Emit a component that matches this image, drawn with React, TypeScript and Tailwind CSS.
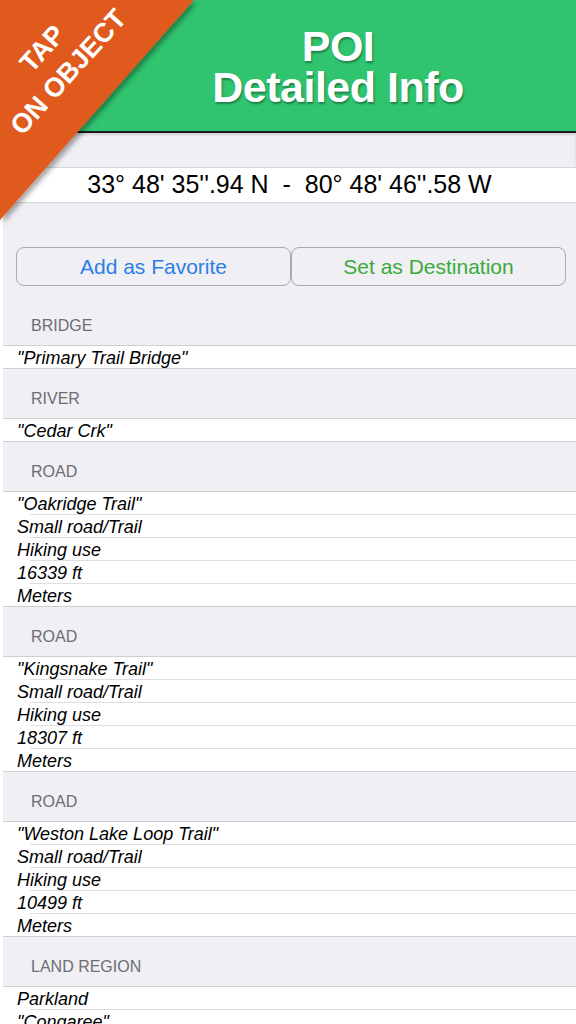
import React from "react";

type Section = { title: string; rows: string[] };

const sections: Section[] = [
  { title: "BRIDGE", rows: ['"Primary Trail Bridge"'] },
  { title: "RIVER", rows: ['"Cedar Crk"'] },
  { title: "ROAD", rows: ['"Oakridge Trail"', "Small road/Trail", "Hiking use", "16339 ft", "Meters"] },
  { title: "ROAD", rows: ['"Kingsnake Trail"', "Small road/Trail", "Hiking use", "18307 ft", "Meters"] },
  { title: "ROAD", rows: ['"Weston Lake Loop Trail"', "Small road/Trail", "Hiking use", "10499 ft", "Meters"] },
  { title: "LAND REGION", rows: ["Parkland", '"Congaree"', "National Park"] },
];

function Ribbon() {
  return (
    <div className="absolute left-0 top-0 z-10 pointer-events-none">
      <svg width="230" height="250" viewBox="0 0 230 250">
        <defs>
          <filter id="rs" x="-20%" y="-20%" width="150%" height="150%">
            <feDropShadow dx="3" dy="3" stdDeviation="2.5" floodColor="#000" floodOpacity="0.35" />
          </filter>
        </defs>
        <polygon points="0,0 194,0 0,220" fill="#df5a1f" filter="url(#rs)" />
        <g transform="translate(55,60) rotate(-48)">
          <text
            x="0"
            y="-17"
            textAnchor="middle"
            dominantBaseline="central"
            fill="#ffffff"
            fontFamily="'Liberation Sans', Arial, sans-serif"
            fontWeight="700"
            fontSize="27"
          >
            TAP
          </text>
          <text
            x="0"
            y="18"
            textAnchor="middle"
            dominantBaseline="central"
            fill="#ffffff"
            fontFamily="'Liberation Sans', Arial, sans-serif"
            fontWeight="700"
            fontSize="27"
          >
            ON OBJECT
          </text>
        </g>
      </svg>
    </div>
  );
}

export default function App() {
  return (
    <div className="relative w-[576px] h-[1024px] overflow-hidden bg-white font-['Liberation_Sans',Arial,sans-serif]">
      <Ribbon />
      <div className="h-[131px] bg-[#30c46f] flex flex-col items-center justify-center pl-[100px] pt-[2px]">
        <div className="text-white font-bold text-[43px] leading-[41px] text-center [text-shadow:1px_2px_2px_rgba(0,0,0,0.35)] tracking-[-0.5px]">
          POI
        </div>
        <div className="text-white font-bold text-[43px] leading-[41px] text-center [text-shadow:1px_2px_2px_rgba(0,0,0,0.35)] tracking-[-0.5px]">
          Detailed Info
        </div>
      </div>
      <div className="h-[2px] bg-[#1c1c1c]" />
      <div className="pl-[3px]">
        <div className="bg-[#efeff4] h-[34px] [box-shadow:inset_0_2px_3px_rgba(0,0,0,0.12)]" />
        <div className="h-[36px] bg-white border-y border-[#d6d6da] flex items-center justify-center text-[25px] text-black whitespace-pre">
          {"33° 48' 35''.94 N  -  80° 48' 46''.58 W"}
        </div>
        <div className="bg-[#efeff4] pt-[44px] pb-[10px] pl-[13px] pr-[10px]">
          <div className="flex h-[39px]">
            <button className="flex-1 rounded-[8px] border border-[#a9a9ae] text-[21px] text-[#2b7fe4] flex items-center justify-center">
              Add as Favorite
            </button>
            <button className="flex-1 rounded-[8px] border border-[#a9a9ae] text-[21px] text-[#3aab3c] flex items-center justify-center">
              Set as Destination
            </button>
          </div>
        </div>
        {sections.map((s, i) => (
          <div key={i}>
            <div className="h-[50px] bg-[#efeff4] border-b border-[#cfcfd3] flex items-end pb-[9px] pl-[28px]">
              <span className="text-[16px] leading-[20px] text-[#6d6d72]">{s.title}</span>
            </div>
            <div className="bg-white border-b border-[#cfcfd3]">
              {s.rows.map((r, j) => (
                <div key={j}>
                  {j > 0 && <div className="ml-[27px] h-px bg-[#dedee2]" />}
                  <div className="h-[22px] leading-[22px] pt-[1px] pl-[14px] italic text-[18px] text-black">{r}</div>
                </div>
              ))}
            </div>
          </div>
        ))}
      </div>
    </div>
  );
}
